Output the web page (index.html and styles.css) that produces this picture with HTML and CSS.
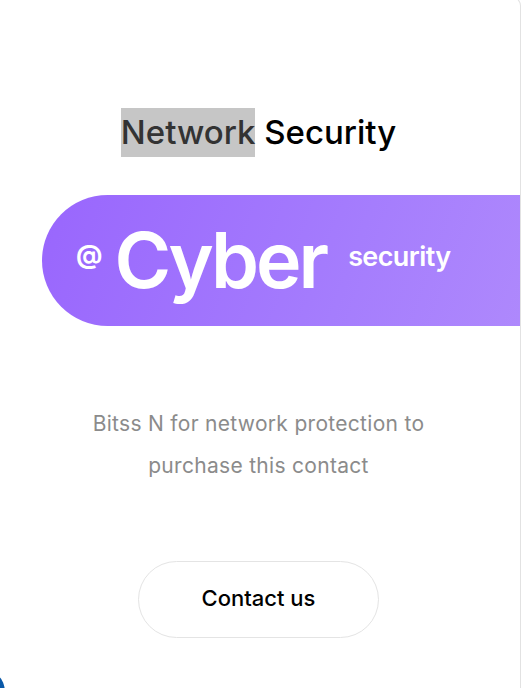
FILE: index.html
```html
<!DOCTYPE html>
<html lang="en">
<head>
<meta charset="utf-8">
<title>Network Security</title>
<link rel="stylesheet" href="styles.css">
</head>
<body>
<main class="card">
  <h1 class="title"><span class="selected">Network</span> Security</h1>
  <div class="banner">
    <span class="at">@</span>
    <span class="cyber">Cyber</span>
    <span class="sec">security</span>
  </div>
  <p class="desc">Bitss N for network protection to<br>purchase this contact</p>
  <div class="actions">
    <button class="btn" type="button">Contact us</button>
  </div>
</main>
<div class="blob"></div>
</body>
</html>
```

FILE: styles.css
```css
html, body {
  margin: 0;
  padding: 0;
  background: #ffffff;
  overflow: hidden;
}

body {
  font-family: Inter, "Noto Sans", sans-serif;
  height: 688px;
}

.card {
  box-sizing: border-box;
  width: 524px;
  height: 700px;
  margin: -4px 0 0 -3px;
  background: #ffffff;
  border-right: 1px solid #e2e2e2;
  border-top: 1px solid #ececec;
  border-radius: 0 10px 0 0;
  overflow: hidden;
  padding-top: 111px;
  text-align: center;
}

.title {
  margin: 0;
  font-size: 33px;
  font-weight: 500;
  line-height: 49px;
  color: #000;
  letter-spacing: 0;
}

.selected {
  display: inline-block;
  background: #c6c6c6;
  color: #333333;
}

.banner {
  margin: 38px 0 0 45px;
  height: 131px;
  width: 560px;
  border-radius: 66px 0 0 66px;
  background: linear-gradient(110deg, #9966fd 0%, #a57dfd 55%, #b28dfc 100%);
  color: #fff;
  display: flex;
  align-items: center;
  box-sizing: border-box;
  padding-left: 34px;
  text-align: left;
}

.at {
  font-size: 26px;
  font-weight: 700;
  margin-top: -12px;
}

.cyber {
  font-size: 77px;
  font-weight: 600;
  letter-spacing: -3px;
  margin-left: 12px;
  line-height: 1;
}

.sec {
  font-size: 27px;
  font-weight: 600;
  letter-spacing: -0.6px;
  margin-left: 22px;
  margin-top: -8px;
}

.desc {
  margin: 77px 0 0 0;
  font-size: 21px;
  letter-spacing: 0.3px;
  line-height: 42px;
  color: #8b8b8b;
}

.actions {
  margin-top: 74px;
  display: flex;
  justify-content: center;
}

.btn {
  width: 241px;
  height: 77px;
  border: 1px solid #e4e4e4;
  border-radius: 39px;
  background: #fff;
  font-family: Inter, "Noto Sans", sans-serif;
  font-size: 22px;
  font-weight: 500;
  color: #000;
  cursor: pointer;
  padding: 0 0 3px;
}

.blob {
  position: fixed;
  left: -43px;
  top: 668px;
  width: 48px;
  height: 48px;
  border-radius: 50%;
  background: #0a59a8;
}
```
